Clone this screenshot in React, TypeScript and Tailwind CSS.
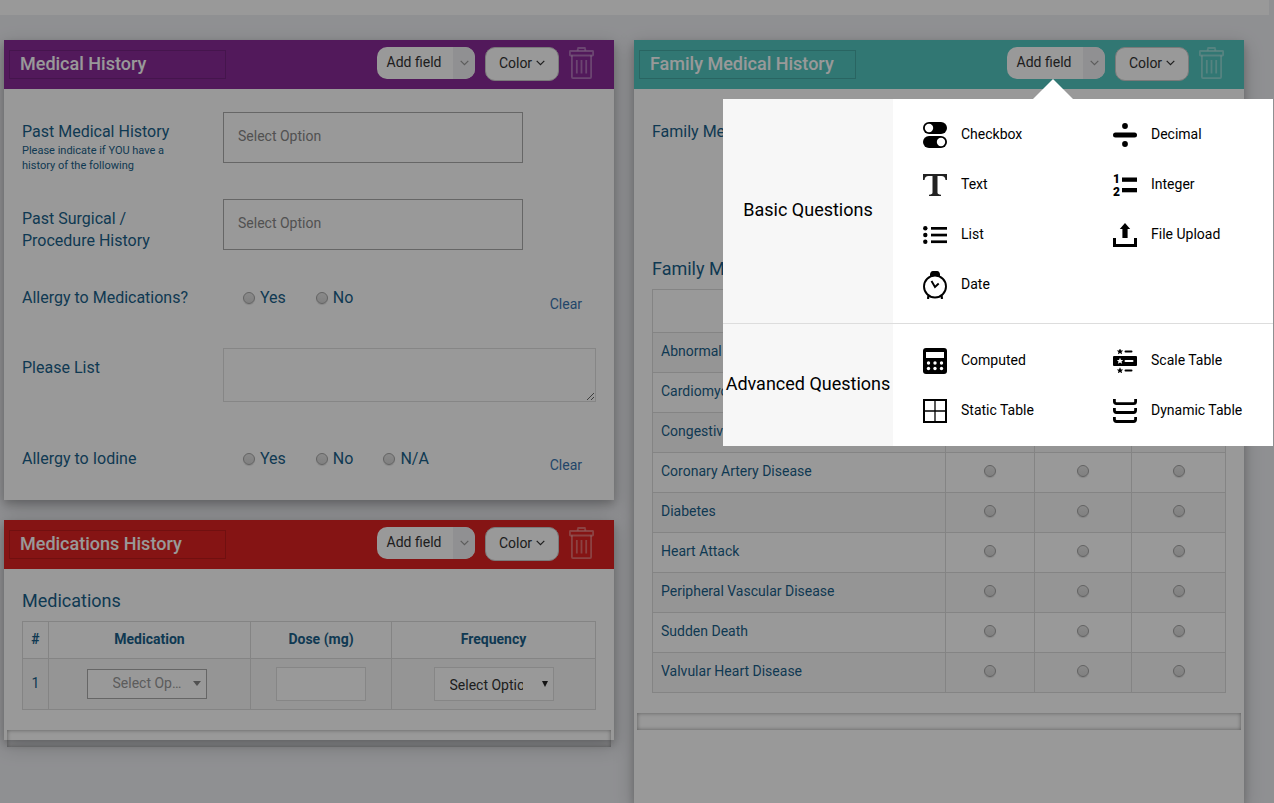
import React from 'react';

interface QuestionType {
  name: string;
  icon: React.ReactNode;
}

const Star: React.FC<{ x: number; y: number; className?: string }> = ({ x, y, className }) => (
  <path
    className={className}
    transform={`translate(${x} ${y})`}
    d="M0-3.2 1-1 3.2-.9 1.5.6 2.1 2.8 0 1.6-2.1 2.8-1.5.6-3.2-.9-1-1Z"
  />
);

const basicLeft: QuestionType[] = [
  {
    name: 'Checkbox',
    icon: (
      <svg viewBox="0 0 24 26" className="w-6 h-[26px]">
        <rect x="0" y="0" width="24" height="12" rx="6" />
        <circle cx="6" cy="6" r="4.2" fill="#fff" />
        <rect x="0" y="14" width="24" height="12" rx="6" />
        <circle cx="18" cy="20" r="4.2" fill="#fff" />
      </svg>
    ),
  },
  {
    name: 'Text',
    icon: (
      <svg viewBox="0 0 24 22" className="w-6 h-[22px]" fill="#222">
        <path d="M0 0H24V6H22.5C22 3 21 2 18.5 2H14.5V18.5C14.5 20 15.5 20.5 18 20.8V22H6V20.8C8.5 20.5 9.5 20 9.5 18.5V2H5.5C3 2 2 3 1.5 6H0Z" />
      </svg>
    ),
  },
  {
    name: 'List',
    icon: (
      <svg viewBox="0 0 24 18" className="w-6 h-[18px]">
        <circle cx="2.3" cy="2.3" r="2.2" />
        <circle cx="2.3" cy="9" r="2.2" />
        <circle cx="2.3" cy="15.7" r="2.2" />
        <rect x="8" y="1" width="16" height="2.7" />
        <rect x="8" y="7.7" width="16" height="2.7" />
        <rect x="8" y="14.4" width="16" height="2.7" />
      </svg>
    ),
  },
  {
    name: 'Date',
    icon: (
      <svg viewBox="0 0 24 28" className="w-6 h-7">
        <path d="M7 5C6.500 2 8 0 10 0H14C16 0 17.500 2 17 5Z" />
        <circle cx="12" cy="15.500" r="11" fill="#fff" stroke="#000" strokeWidth="1.900" />
        <path d="M5.500 24.500 5 28M18.500 24.500 19 28" stroke="#000" strokeWidth="2.200" />
        <path d="M8.500 10 12 16 15.700 12.500" fill="none" stroke="#000" strokeWidth="1.900" />
      </svg>
    ),
  },
];

const basicRight: QuestionType[] = [
  {
    name: 'Decimal',
    icon: (
      <svg viewBox="0 0 24 24" className="w-6 h-6">
        <circle cx="12" cy="3" r="2.900" />
        <rect x="0" y="9.500" width="24" height="5" rx="2.500" />
        <circle cx="12" cy="21" r="2.900" />
      </svg>
    ),
  },
  {
    name: 'Integer',
    icon: (
      <svg viewBox="0 0 24 22" className="w-6 h-[22px] overflow-visible">
        <text x="0" y="9" fontSize="12" fontWeight="900" fontFamily="Roboto, sans-serif">1</text>
        <text x="0" y="22" fontSize="12" fontWeight="900" fontFamily="Roboto, sans-serif">2</text>
        <rect x="9" y="3.500" width="15" height="4.300" />
        <rect x="9" y="14" width="15" height="4.300" />
      </svg>
    ),
  },
  {
    name: 'File Upload',
    icon: (
      <svg viewBox="0 0 24 24" className="w-6 h-6">
        <path d="M12 0 17.200 6H14.600V15H9.400V6H6.800Z" />
        <path d="M1.500 15V22.500H22.500V15" fill="none" stroke="#000" strokeWidth="3" />
      </svg>
    ),
  },
];

const advancedLeft: QuestionType[] = [
  {
    name: 'Computed',
    icon: (
      <svg viewBox="0 0 24 26" className="w-6 h-[26px]">
        <rect width="24" height="26" rx="3" />
        <g fill="#fff">
          <rect x="3" y="4" width="18" height="6" />
          <circle cx="5.500" cy="15" r="1.700" />
          <circle cx="12" cy="15" r="1.700" />
          <circle cx="18.500" cy="15" r="1.700" />
          <circle cx="5.500" cy="20.500" r="1.700" />
          <circle cx="12" cy="20.500" r="1.700" />
          <circle cx="18.500" cy="20.500" r="1.700" />
        </g>
      </svg>
    ),
  },
  {
    name: 'Static Table',
    icon: (
      <svg viewBox="0 0 24 24" className="w-6 h-6" fill="none" stroke="#000">
        <rect x="1" y="1" width="22" height="22" strokeWidth="2" />
        <path d="M12 2V22M2 12H22" strokeWidth="1.300" />
      </svg>
    ),
  },
];

const advancedRight: QuestionType[] = [
  {
    name: 'Scale Table',
    icon: (
      <svg viewBox="0 0 24 24" className="w-6 h-6">
        <rect y="7" width="24" height="10" rx="1" />
        <Star x={7} y={2.5} />
        <Star x={7} y={12} className="fill-white" />
        <Star x={7} y={21.5} />
        <path d="M12.500 2.500H18.500M12.500 21.500H18.500" stroke="#000" strokeWidth="2" strokeLinecap="round" />
        <path d="M12.500 12H19.500" stroke="#fff" strokeWidth="2" strokeLinecap="round" />
      </svg>
    ),
  },
  {
    name: 'Dynamic Table',
    icon: (
      <svg viewBox="0 0 24 24" className="w-6 h-6" fill="none" stroke="#000" strokeWidth="2.800">
        <path d="M1.400 0V2.500Q1.400 4.700 3.500 4.700H20.500Q22.600 4.700 22.600 2.500V0" />
        <path d="M1.400 9V11.300Q1.400 13.500 3.500 13.500H20.500Q22.600 13.500 22.600 11.300V9" />
        <path d="M1.400 18V20.300Q1.400 22.500 3.500 22.500H20.500Q22.600 22.500 22.600 20.300V18" />
      </svg>
    ),
  },
];

const conditions = [
  'Abnormal Heart Rhythm',
  'Cardiomyopathy',
  'Congestive Heart Failure',
  'Coronary Artery Disease',
  'Diabetes',
  'Heart Attack',
  'Peripheral Vascular Disease',
  'Sudden Death',
  'Valvular Heart Disease',
];

const Chevron: React.FC = () => (
  <svg viewBox="0 0 9 6" className="w-[9px] h-1.5" fill="none" stroke="currentColor" strokeWidth="1.200">
    <path d="M.7.9 4.500 4.700 8.300.9" />
  </svg>
);

const TrashIcon: React.FC = () => (
  <svg viewBox="0 0 25 32" className="w-[25px] h-8" fill="none" stroke="currentColor" strokeWidth="1.800">
    <path d="M8.500 3.500 9.200 1H15.800L16.500 3.500" />
    <rect x=".9" y="4" width="23.200" height="4.500" rx=".5" />
    <path d="M2.900 8.500V30.100Q2.900 31.100 3.900 31.100H21.100Q22.100 31.100 22.100 30.100V8.500" />
    <path d="M7.800 13V26.500M12.500 13V26.500M17.200 13V26.500" />
  </svg>
);

const QuestionList: React.FC<{ items: QuestionType[] }> = ({ items }) => (
  <ul className="w-[190px]">
    {items.map((item) => (
      <li key={item.name}>
        <button type="button" className="flex h-[50px] w-full items-center gap-3.5 pl-[30px] text-sm text-black">
          {item.icon}
          <span className="pb-0.5">{item.name}</span>
        </button>
      </li>
    ))}
  </ul>
);

const FieldMenu: React.FC = () => (
  <div className="absolute top-[52px] -right-[168px] z-20 w-[550px] bg-white text-black">
    <svg viewBox="0 0 40 20" className="absolute -top-5 left-[310px] w-10 h-5" fill="#fff">
      <path d="M0 20 20 0 40 20Z" />
    </svg>
    <section className="flex border-b border-[#ddd]">
      <h3 className="flex w-[170px] items-center justify-center bg-[#f7f7f7] pb-0.5 text-lg whitespace-nowrap">Basic Questions</h3>
      <div className="flex pt-[11px] pb-[13px]">
        <QuestionList items={basicLeft} />
        <QuestionList items={basicRight} />
      </div>
    </section>
    <section className="flex">
      <h3 className="flex w-[170px] items-center justify-center bg-[#f7f7f7] pb-0.5 text-lg whitespace-nowrap">Advanced Questions</h3>
      <div className="flex pt-3 pb-2.5">
        <QuestionList items={advancedLeft} />
        <QuestionList items={advancedRight} />
      </div>
    </section>
  </div>
);

interface CardProps {
  title: string;
  headerClass: string;
  menuOpen?: boolean;
  className?: string;
  children: React.ReactNode;
}

const Card: React.FC<CardProps> = ({ title, headerClass, menuOpen, className = '', children }) => (
  <section
    className={`bg-white shadow-[0_4px_8px_0_rgba(0,0,0,0.2),0_6px_20px_0_rgba(0,0,0,0.19)] ${className}`}
  >
    <header className={`flex h-[49px] items-start gap-2.5 pt-[7px] pl-[5px] pr-5 ${headerClass}`}>
      <input
        aria-label="Section title"
        defaultValue={title}
        className="mt-[3px] mr-auto h-[29px] w-[217px] min-w-0 border border-black/15 bg-transparent px-2.5 pb-0.5 text-lg font-medium text-white"
      />
      <div className="relative">
        <button type="button" className="flex h-8 w-[98px] overflow-hidden rounded-[10px] bg-white text-sm text-[#333]">
          <span className="flex-1 pt-[5px] pr-0.5">Add field</span>
          <span className="flex h-full w-[22px] items-center justify-center bg-[#f0f0f3] text-[#999]">
            <Chevron />
          </span>
        </button>
        {menuOpen && <FieldMenu />}
      </div>
      <button
        type="button"
        className="flex h-[34px] w-[74px] items-center justify-center gap-1 rounded-[10px] border border-[#ccc] bg-white pb-0.5 text-sm text-[#333]"
      >
        Color <Chevron />
      </button>
      <button type="button" aria-label="Delete section" className="text-white/35">
        <TrashIcon />
      </button>
    </header>
    {children}
  </section>
);

const DropStrip: React.FC = () => (
  <div className="mx-[3px] h-[17px] shadow-[inset_0_0_4px_rgba(0,0,0,0.4)]" />
);

const radioClass =
  'block size-3 shrink-0 appearance-none rounded-full border border-[#a5a5a5] bg-linear-to-b from-[#e6e6e6] to-[#d6d6d6] shadow-[0_1px_1px_rgba(0,0,0,0.12)]';

const RadioField: React.FC<{ label: string; name: string; options: string[] }> = ({ label, name, options }) => (
  <fieldset className="flex">
    <legend className="float-left w-[201px] pt-[9px]">{label}</legend>
    <div className="flex flex-1 items-start gap-[30px] pt-[9px] pl-5">
      {options.map((option) => (
        <label key={option} className="flex items-center gap-[5px]">
          <input type="radio" name={name} className={radioClass} />
          {option}
        </label>
      ))}
      <a href="#clear" className="mt-1.5 mr-3.5 ml-auto text-sm leading-[22px] text-[#3a75b0]">Clear</a>
    </div>
  </fieldset>
);

const MedicalHistory: React.FC = () => (
  <Card title="Medical History" headerClass="bg-[#892a98]">
    <div className="flex flex-col px-[18px] pt-[23px] pb-6 leading-[22px]">
      <div className="flex h-[87px] items-start">
        <label htmlFor="past-medical" className="w-[201px] pt-[9px] pr-8">
          Past Medical History
          <span className="block text-[11px] leading-[15px]">Please indicate if YOU have a history of the following</span>
        </label>
        <select id="past-medical" className="h-[51px] w-[300px] appearance-none border border-[#aaa] px-3.5 pb-1 text-sm text-[#888]">
          <option>Select Option</option>
        </select>
      </div>
      <div className="flex h-[79px] items-start">
        <label htmlFor="past-surgical" className="w-[201px] pt-[9px] pr-8">Past Surgical / Procedure History</label>
        <select id="past-surgical" className="h-[51px] w-[300px] appearance-none border border-[#aaa] px-3.5 pb-1 text-sm text-[#888]">
          <option>Select Option</option>
        </select>
      </div>
      <div className="min-h-[70px]">
        <RadioField label="Allergy to Medications?" name="allergy-medications" options={['Yes', 'No']} />
      </div>
      <div className="flex min-h-[91px] items-start">
        <label htmlFor="please-list" className="w-[201px] pt-[9px]">Please List</label>
        <textarea id="please-list" className="h-[54px] flex-1 border border-[#e0e0e0]" />
      </div>
      <RadioField label="Allergy to Iodine" name="allergy-iodine" options={['Yes', 'No', 'N/A']} />
    </div>
  </Card>
);

const MedicationsHistory: React.FC = () => (
  <Card title="Medications History" headerClass="bg-[#de2222]">
    <div className="px-[18px] pt-5 pb-5">
      <h2 className="text-lg leading-6">Medications</h2>
      <table className="mt-2 w-full table-fixed border-collapse text-center text-sm">
        <thead>
          <tr className="h-[37px]">
            <th className="w-[26px] border border-[#ddd] pb-0.5 font-bold">#</th>
            <th className="w-[202px] border border-[#ddd] pb-0.5 font-bold">Medication</th>
            <th className="w-[141px] border border-[#ddd] pb-0.5 font-bold">Dose (mg)</th>
            <th className="border border-[#ddd] pb-0.5 font-bold">Frequency</th>
          </tr>
        </thead>
        <tbody>
          <tr className="h-[51px] bg-[#f9f9f9]">
            <td className="border border-[#ddd] pb-0.5">1</td>
            <td className="border border-[#ddd] pr-1.5">
              <div className="relative mx-auto w-[120px]">
                <select
                  aria-label="Medication"
                  className="block h-[30px] w-full appearance-none border border-[#aaa] bg-white pr-6 pb-0.5 pl-[25px] text-ellipsis text-[#999]"
                >
                  <option>Select Option</option>
                </select>
                <span className="pointer-events-none absolute top-3 right-1.5 border-x-4 border-t-[5px] border-x-transparent border-t-[#888]" />
              </div>
            </td>
            <td className="border border-[#ddd]">
              <input aria-label="Dose (mg)" className="mx-auto block h-[34px] w-[90px] border border-[#e0e0e0] bg-white" />
            </td>
            <td className="border border-[#ddd]">
              <div className="relative mx-auto w-[120px]">
                <select
                  aria-label="Frequency"
                  className="block h-[34px] w-full appearance-none border border-[#e0e0e0] bg-white pt-0.5 pr-[30px] pl-[15px] text-[#333]"
                >
                  <option>Select Option</option>
                </select>
                <span className="pointer-events-none absolute top-3.5 right-1.5 border-x-3 border-t-6 border-x-transparent border-t-[#222]" />
              </div>
            </td>
          </tr>
        </tbody>
      </table>
    </div>
    <div className="-mb-[7px]">
      <DropStrip />
    </div>
  </Card>
);

const FamilyHistory: React.FC = () => (
  <Card title="Family Medical History" headerClass="bg-[#52c6c0]" menuOpen>
    <div className="px-[18px] pt-8 pb-5">
      <p className="min-h-[136px] leading-[22px]">Family Medical History</p>
      <h2 className="text-lg leading-6">Family Medical History</h2>
      <table className="mt-2 w-full table-fixed border-collapse text-sm">
        <thead>
          <tr className="h-[43px]">
            <th className="border border-[#ddd]" />
            <th className="w-[89px] border border-[#ddd]" />
            <th className="w-[97px] border border-[#ddd]" />
            <th className="w-[94px] border border-[#ddd]" />
          </tr>
        </thead>
        <tbody>
          {conditions.map((condition) => (
            <tr key={condition} className="h-10 odd:bg-[#f9f9f9]">
              <td className="border border-[#ddd] px-2 pb-1">{condition}</td>
              {[1, 2, 3].map((column) => (
                <td key={column} className="border border-[#ddd] pb-1">
                  <input type="radio" name={condition} aria-label={`${condition} ${column}`} className={`mx-auto ${radioClass}`} />
                </td>
              ))}
            </tr>
          ))}
        </tbody>
      </table>
    </div>
    <DropStrip />
  </Card>
);

const App: React.FC = () => {
  return (
    <div className="flex min-h-screen flex-col overflow-x-hidden bg-[#eff0f4] font-[Roboto,sans-serif] text-[#1a5f8a]">
      <div className="mr-[5px] h-[15px] bg-white" />
      <main className="grid flex-1 grid-cols-2 gap-5 pt-[25px] pr-[30px] pl-1">
        <div className="flex flex-col gap-5">
          <MedicalHistory />
          <MedicationsHistory />
        </div>
        <FamilyHistory />
      </main>
      <div className="fixed inset-0 z-10 bg-black/40" />
    </div>
  );
};

export default App;
